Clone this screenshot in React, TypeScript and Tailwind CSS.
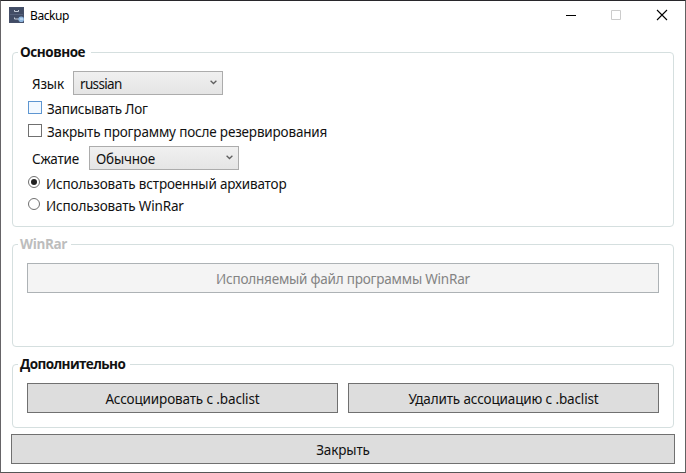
import type { ReactNode } from "react";

function Group({ title, className, titleClass, children }: { title: string; className: string; titleClass: string; children: ReactNode }) {
  return (
    <fieldset className={`w-[662px] min-w-0 shrink-0 rounded-[4px] border border-[#d5dfdf] ${className}`}>
      <legend className={`ml-[5px] h-[19px] whitespace-nowrap pl-[2px] font-["Open_Sans","Noto_Sans",sans-serif] text-[13.5px] font-bold leading-[19px] ${titleClass}`}>{title}</legend>
      {children}
    </fieldset>
  );
}

function Combo({ value, textClass }: { value: string; textClass: string }) {
  return (
    <div className="flex h-6 w-[150px] items-center justify-between border border-[#acacac] bg-gradient-to-b from-[#f0f0f0] to-[#e5e5e5] pl-[6px] pr-[5px]">
      <span className={`pt-[2px] ${textClass}`}>{value}</span>
      <svg width="7" height="5" viewBox="0 0 7 5" className="mb-[1px]" fill="none" stroke="#606060" strokeWidth="1.3">
        <path d="M.6.7 3.5 3.5 6.4.7" />
      </svg>
    </div>
  );
}

function Radio({ checked = false }: { checked?: boolean }) {
  return (
    <span className="flex size-[12px] items-center justify-center rounded-full border border-[#707070] bg-white">
      {checked && <span className="size-[6px] rounded-full bg-[#212121]" />}
    </span>
  );
}

const button = "flex h-[30px] shrink-0 items-center justify-center border border-[#707070] bg-[#dddddd] pt-px tracking-[-0.14px]";

export default function App() {
  return (
    <div className='flex h-[473px] w-[686px] flex-col overflow-hidden whitespace-nowrap border border-t-[#28272b] border-r-[#626262] border-b-[#555555] border-l-[#666467] bg-white font-["Noto_Sans","Open_Sans",sans-serif] text-[13.5px] leading-[18px] tracking-[-0.17px] text-[#111111]'>
      <header className="flex h-[42px] shrink-0 items-start text-black">
        <svg width="16" height="17" viewBox="0 0 16 17" className="ml-2 mt-[6px]">
          <path fill="#465069" d="M0 0h15v16H0z" />
          <path fill="#56617b" d="M1 7h13v1H1z" />
          <path fill="#414c65" d="M1 1h13v6H1zM1 8h13v7H1z" />
          <path fill="none" stroke="#c2cad6" d="M5.500 3v1.500h4V3M5.500 10.500V12H10" />
          <circle cx="12.200" cy="12.300" r="2.800" fill="#8fb7e0" />
          <path fill="#b6d3ee" d="M11 11h3v2h-3z" />
        </svg>
        <span className="ml-[5px] mt-[6px] text-[12px] tracking-[-0.4px]">Backup</span>
        <svg width="103" height="12" viewBox="0 0 103 12" className="ml-auto mr-[17px] mt-[8px]" fill="none">
          <path stroke="#000" d="M1 6.500h10" />
          <path stroke="#cccccc" d="M46.500 1.500h9v9h-9z" />
          <path stroke="#000" strokeWidth="1.100" d="m92 1 10 10m0-10L92 11" />
        </svg>
      </header>

      <Group title="Основное" className="ml-[11px] h-[184px]" titleClass="w-[73px] tracking-[-0.45px]">
        <div className="ml-[15px] mt-[9px] flex h-6 items-center">
          <span className="ml-1 w-[41px] pt-[2px]">Язык</span>
          <Combo value="russian" textClass="tracking-[-0.65px]" />
        </div>
        <div className="ml-[15px] mt-[6px] flex h-[13px] items-center">
          <span className="h-[13px] w-[14px] border border-[#5e96d1] bg-[#f3f9ff]" />
          <span className="ml-[5px] pt-[3px] tracking-[-0.26px]">Записывать Лог</span>
        </div>
        <div className="ml-[15px] mt-[10px] flex h-[13px] items-center">
          <span className="h-[13px] w-[14px] border border-[#707070]" />
          <span className="ml-[5px] pt-[3px]">Закрыть программу после резервирования</span>
        </div>
        <div className="ml-[15px] mt-[9px] flex h-6 items-center">
          <span className="ml-1 w-[57px] pt-[2px]">Сжатие</span>
          <Combo value="Обычное" textClass="tracking-[-0.2px]" />
        </div>
        <div className="ml-[15px] mt-[6px] flex h-[12px] items-center">
          <Radio checked />
          <span className="ml-[6px] pt-[4px]">Использовать встроенный архиватор</span>
        </div>
        <div className="ml-[15px] mt-[10px] flex h-[12px] items-center">
          <Radio />
          <span className="ml-[6px] pt-[4px]">Использовать WinRar</span>
        </div>
      </Group>

      <Group title="WinRar" className="ml-[11px] mt-[8px] h-[112px]" titleClass="w-[53px] tracking-[-0.35px] text-[#bdbdbd]">
        <div className="ml-[14px] mt-[9px] flex h-[30px] w-[632px] items-center justify-center border border-[#adb2b5] bg-[#f4f4f4] pt-px tracking-[-0.21px] text-[#838383]">
          <span>Исполняемый файл программы WinRar</span>
        </div>
      </Group>

      <Group title="Дополнительно" className="ml-[11px] mt-[8px] h-[73px]" titleClass="w-[112px] tracking-[-0.6px]">
        <div className="ml-[14px] mt-[9px] flex gap-[10px]">
          <div className={`${button} w-[311px]`}><span>Ассоциировать с .baclist</span></div>
          <div className={`${button} w-[311px]`}><span>Удалить ассоциацию с .baclist</span></div>
        </div>
      </Group>

      <div className={`${button} ml-[10px] mt-[6px] w-[664px]`}><span>Закрыть</span></div>
    </div>
  );
}
